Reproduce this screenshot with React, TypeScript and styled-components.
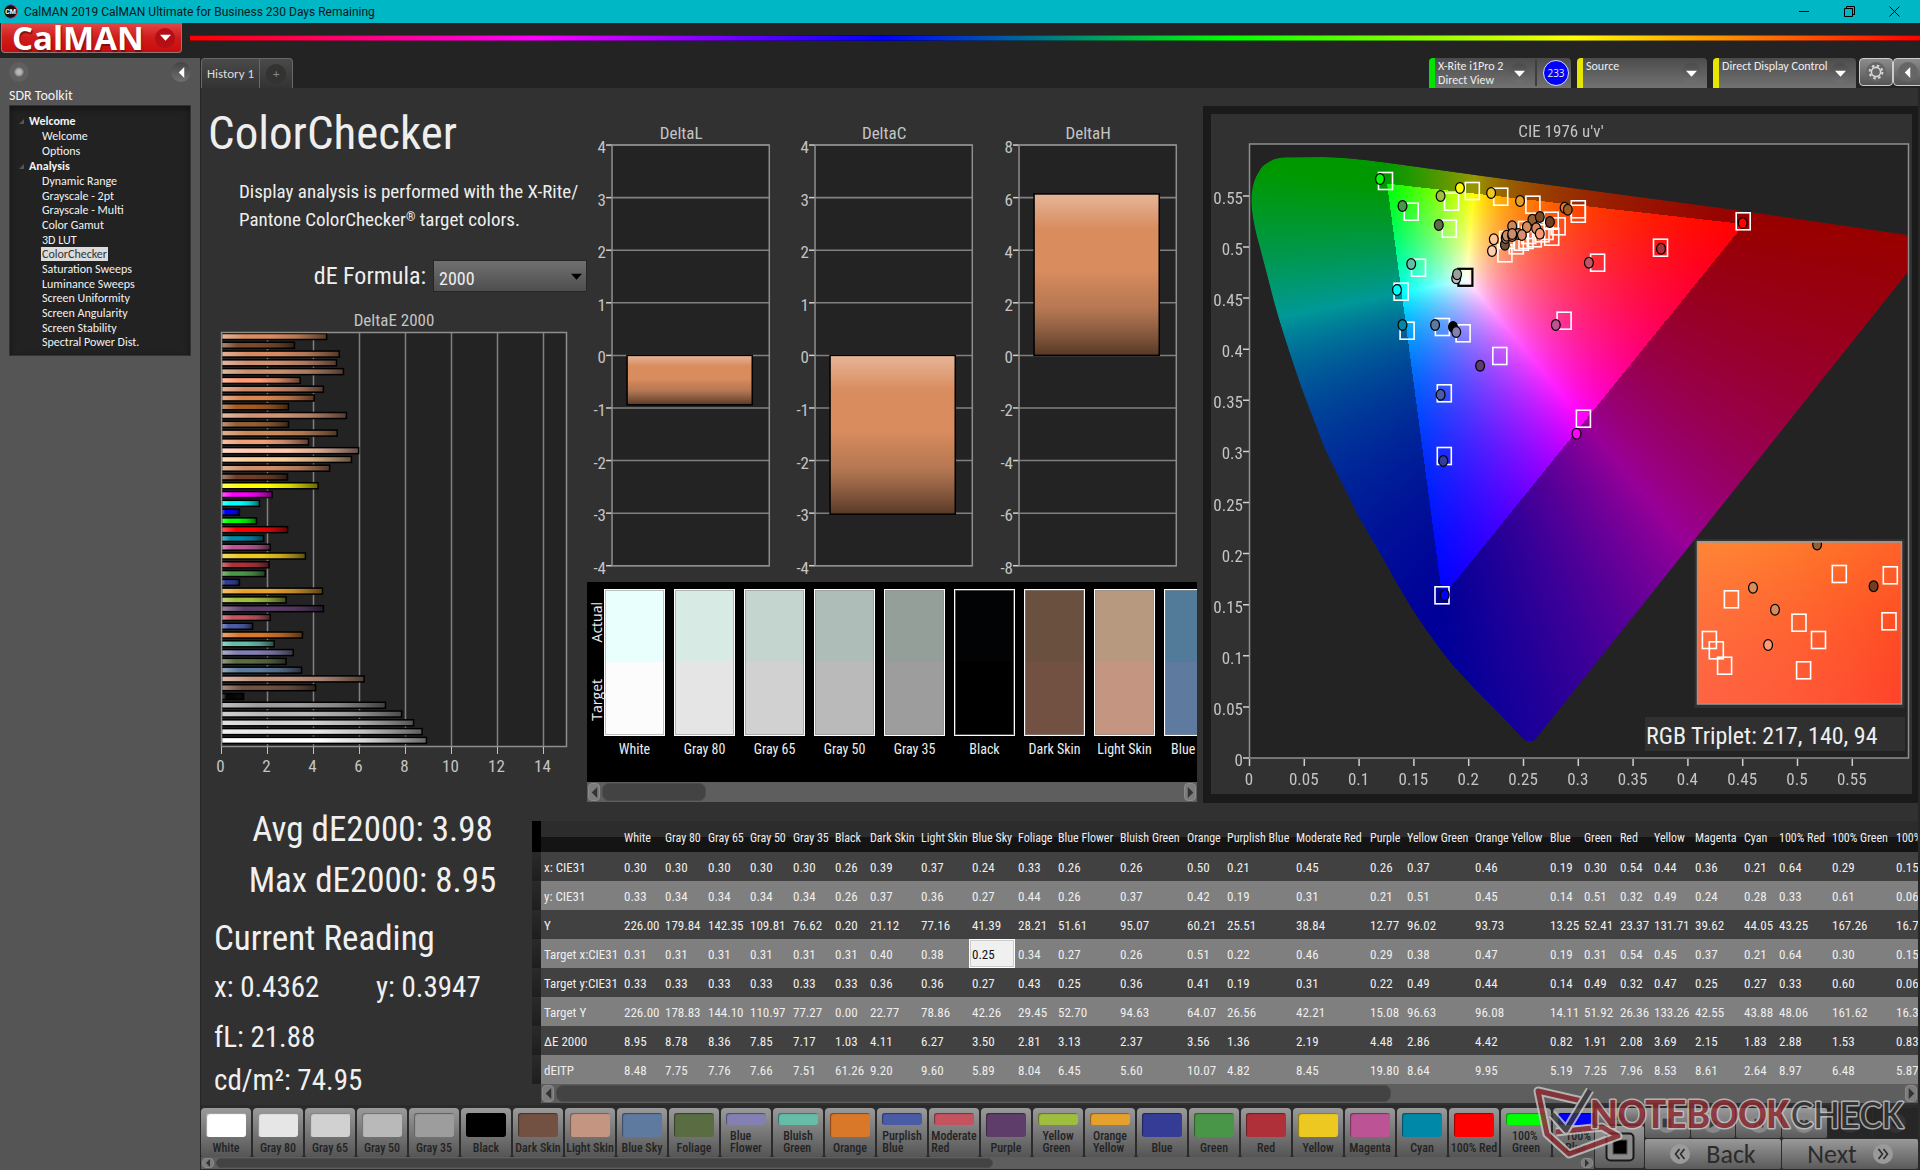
import React, { useLayoutEffect, useRef } from "react";
import styled, { createGlobalStyle, css } from "styled-components";

const ui = `Carlito, Calibri, Lato, sans-serif`;
const narrow = `"Roboto Condensed", Roboto, sans-serif`;

const GlobalStyle = createGlobalStyle`
  *, *::before, *::after { box-sizing: border-box; }
  body { margin: 0; background: #232323; color: #eee; font-family: ${ui}; }
  button { font: inherit; color: inherit; border: 0; padding: 0; margin: 0; cursor: pointer; }
  h1, h2, p, ul, dl, dd, dt { margin: 0; padding: 0; }
  ul { list-style: none; }
  a { color: inherit; text-decoration: none; }
`;

/* ---------- data ---------- */

type Patch = { name: string; color: string; values: string[]; width: number };

const rowNames = ["x: CIE31", "y: CIE31", "Y", "Target x:CIE31", "Target y:CIE31", "Target Y", "ΔE 2000", "dEITP"];

const patches: Patch[] = [
  { name: "White", color: "#ffffff", width: 41, values: ["0.30", "0.33", "226.00", "0.31", "0.33", "226.00", "8.95", "8.48"] },
  { name: "Gray 80", color: "#e6e6e6", width: 43, values: ["0.30", "0.34", "179.84", "0.31", "0.33", "178.83", "8.78", "7.75"] },
  { name: "Gray 65", color: "#d1d1d1", width: 42, values: ["0.30", "0.34", "142.35", "0.31", "0.33", "144.10", "8.36", "7.76"] },
  { name: "Gray 50", color: "#b9b9b9", width: 43, values: ["0.30", "0.34", "109.81", "0.31", "0.33", "110.97", "7.85", "7.66"] },
  { name: "Gray 35", color: "#9d9d9d", width: 42, values: ["0.30", "0.34", "76.62", "0.31", "0.33", "77.27", "7.17", "7.51"] },
  { name: "Black", color: "#000000", width: 35, values: ["0.26", "0.26", "0.20", "0.31", "0.33", "0.00", "1.03", "61.26"] },
  { name: "Dark Skin", color: "#735142", width: 51, values: ["0.39", "0.37", "21.12", "0.40", "0.36", "22.77", "4.11", "9.20"] },
  { name: "Light Skin", color: "#c49682", width: 51, values: ["0.37", "0.36", "77.16", "0.38", "0.36", "78.86", "6.27", "9.60"] },
  { name: "Blue Sky", color: "#5e7a9e", width: 46, values: ["0.24", "0.27", "41.39", "0.25", "0.27", "42.26", "3.50", "5.89"] },
  { name: "Foliage", color: "#596c42", width: 40, values: ["0.33", "0.44", "28.21", "0.34", "0.43", "29.45", "2.81", "8.04"] },
  { name: "Blue Flower", color: "#8480b1", width: 62, values: ["0.26", "0.26", "51.61", "0.27", "0.25", "52.70", "3.13", "6.45"] },
  { name: "Bluish Green", color: "#65bda8", width: 67, values: ["0.26", "0.37", "95.07", "0.26", "0.36", "94.63", "2.37", "5.60"] },
  { name: "Orange", color: "#d97829", width: 40, values: ["0.50", "0.42", "60.21", "0.51", "0.41", "64.07", "3.56", "10.07"] },
  { name: "Purplish Blue", color: "#4a5ca6", width: 69, values: ["0.21", "0.19", "25.51", "0.22", "0.19", "26.56", "1.36", "4.82"] },
  { name: "Moderate Red", color: "#c45360", width: 74, values: ["0.45", "0.31", "38.84", "0.46", "0.31", "42.21", "2.19", "8.45"] },
  { name: "Purple", color: "#5e3d6b", width: 37, values: ["0.26", "0.21", "12.77", "0.29", "0.22", "15.08", "4.48", "19.80"] },
  { name: "Yellow Green", color: "#9fbd3f", width: 68, values: ["0.37", "0.51", "96.02", "0.38", "0.49", "96.63", "2.86", "8.64"] },
  { name: "Orange Yellow", color: "#e6a12d", width: 75, values: ["0.46", "0.45", "93.73", "0.47", "0.44", "96.08", "4.42", "9.95"] },
  { name: "Blue", color: "#343c96", width: 34, values: ["0.19", "0.14", "13.25", "0.19", "0.14", "14.11", "0.82", "5.19"] },
  { name: "Green", color: "#4a9648", width: 36, values: ["0.30", "0.51", "52.41", "0.31", "0.49", "51.92", "1.91", "7.25"] },
  { name: "Red", color: "#b0303a", width: 34, values: ["0.54", "0.32", "23.37", "0.54", "0.32", "26.36", "2.08", "7.96"] },
  { name: "Yellow", color: "#ecc820", width: 41, values: ["0.44", "0.49", "131.71", "0.45", "0.47", "133.26", "3.69", "8.53"] },
  { name: "Magenta", color: "#bc5395", width: 49, values: ["0.36", "0.24", "39.62", "0.37", "0.25", "42.55", "2.15", "8.61"] },
  { name: "Cyan", color: "#0088a8", width: 35, values: ["0.21", "0.28", "44.05", "0.21", "0.27", "43.88", "1.83", "2.64"] },
  { name: "100% Red", color: "#ff0000", width: 53, values: ["0.64", "0.33", "43.25", "0.64", "0.33", "48.06", "2.88", "8.97"] },
  { name: "100% Green", color: "#00ff00", width: 64, values: ["0.29", "0.61", "167.26", "0.30", "0.60", "161.62", "1.53", "6.48"] },
  { name: "100% Blue", color: "#0000ff", width: 60, values: ["0.15", "0.06", "16.75", "0.15", "0.06", "16.31", "0.83", "5.87"] },
];

const deltaE: [number, string][] = [
  [4.57, "#d98c5e"], [3.17, "#7b4a2a"], [5.12, "#d68a62"], [5, "#cf9072"], [5.3, "#c9906e"], [3.42, "#ff9c74"],
  [4.43, "#d08a6a"], [4.03, "#d98450"], [2.91, "#a55a20"], [5.43, "#d49474"], [2.91, "#935f35"], [5.03, "#c88a5a"],
  [3.78, "#f0a078"], [5.96, "#ffc8ac"], [5.65, "#ffcc98"], [4.7, "#d08c64"], [2.87, "#703e26"], [4.2, "#ffff00"],
  [2.2, "#ff00ff"], [1.65, "#00ffff"], [0.78, "#0000ff"], [1.52, "#00ff00"], [2.87, "#ff0000"], [1.83, "#0088a8"],
  [2.12, "#bc5395"], [3.65, "#ecc820"], [2.07, "#b0303a"], [1.9, "#4a9648"], [0.78, "#343c96"], [4.39, "#e6a12d"],
  [2.81, "#9fbd3f"], [4.43, "#5e3d6b"], [2.12, "#c45360"], [1.35, "#4a5ca6"], [3.52, "#d97829"], [2.29, "#65bda8"],
  [3.12, "#8480b1"], [2.81, "#596c42"], [3.48, "#5e7a9e"], [6.2, "#c49682"], [4.09, "#735142"], [0.96, "#050505"],
  [7.13, "#9d9d9d"], [7.83, "#b9b9b9"], [8.35, "#d1d1d1"], [8.72, "#e6e6e6"], [8.91, "#ffffff"],
];

/* ---------- title bar and header ---------- */

const Page = styled.div`display: flex; flex-direction: column; min-height: 100vh;`;

const TitleBar = styled.header`
  display: flex; align-items: center; gap: 6px; height: 23px; padding: 0 15px 0 3px;
  background: #00b7c6; color: #04181a; font: 12px Roboto, "Open Sans", sans-serif;
  & > span { flex: 1; }
`;
const WindowButton = styled.button`
  display: grid; place-items: center; width: 22px; height: 20px; margin-left: 17px; background: none;
`;

const Banner = styled.div`display: flex; height: 35px; padding: 0 0 0 1px; gap: 8px;`;
const Brand = styled.button`
  display: flex; align-items: center; justify-content: space-between; width: 181px; height: 30px; padding: 0 6px 0 10px;
  background: linear-gradient(#e04848, #d01c1c 50%, #c80c0c); border: 1px solid #8d7a7a; border-top: 0;
  border-radius: 0 0 4px 4px; color: #fff; font: 700 33px/28px "Open Sans", "Noto Sans", sans-serif;
  text-shadow: 1px 2px 1px #7a1010;
`;
const Spectrum = styled.div`
  flex: 1; height: 6px; margin-top: 12px; border: solid #0006; border-width: 1px 0;
  background: linear-gradient(90deg, red, magenta 20%, blue 40%, lime 60%, yellow 80%, red);
`;
const Round = styled.span<{ $tone?: string }>`
  display: grid; place-items: center; width: 20px; height: 20px; border-radius: 50%;
  background: ${(p) => p.$tone ?? "linear-gradient(#4a4a4a, #707070)"};
`;

const Triangle = ({ dir, color = "#fff", size = 11 }: { dir: "down" | "left" | "right"; color?: string; size?: number }) => {
  const d = { down: "M0 2.5H10L5 8Z", left: "M7.5 0V10L2.5 5Z", right: "M2.5 0V10L7.5 5Z" }[dir];
  return <svg width={size} height={size} viewBox="0 0 10 10" aria-hidden="true"><path d={d} fill={color} /></svg>;
};

/* ---------- sidebar ---------- */

const Body = styled.div`display: flex; flex: 1;`;
const Sidebar = styled.aside`width: 200px; flex: none; background: #555; color: #f2f2f2;`;
const SidebarTop = styled.div`display: flex; justify-content: space-between; align-items: center; height: 28px; padding: 0 9px;`;
const Lamp = styled.span`
  width: 20px; height: 20px; border-radius: 50%;
  background: radial-gradient(circle, #b8b8b8 0 2px, #8c8c8c 4px, #606060 5px, #5c5c5c);
`;
const SidebarTitle = styled.h2`padding: 1px 0 0 9px; font: 14px/18px ${ui};`;
const Tree = styled.nav`
  margin: 0 9px; padding: 7px 0 5px; border: 1px solid #333; background: #222; box-shadow: inset 0 3px 6px #141414; font-size: 12px;
`;
const Branch = styled.p`
  display: flex; align-items: center; gap: 5px; padding-left: 9px; font-weight: 700; line-height: 16px;
`;
const Leaves = styled.ul<{ $height: number }>`
  display: grid; grid-auto-rows: 1fr; justify-items: start; height: ${(p) => p.$height}px; padding-left: 31px;
`;
const Leaf = styled.a<{ $on?: boolean }>`
  display: block; padding: 0 1px; line-height: 14px;
  ${(p) => p.$on && css`background: #dcdcdc; color: #333;`}
`;

/* ---------- workspace ---------- */

const Work = styled.main`display: flex; flex-direction: column; flex: 1; min-width: 0; border-left: 1px solid #262626;`;
const TopTabs = styled.div`display: flex; justify-content: space-between; height: 30px;`;
const Tabs = styled.div`
  display: flex; border: 1px solid #686868; border-bottom: 0; border-radius: 4px 4px 0 0;
  background: linear-gradient(#4a4a4a, #333); font-size: 13px;
`;
const Tab = styled.button`
  display: grid; place-items: center; background: none; min-width: 33px; padding: 0 5px; color: #ddd;
  & + & { border-left: 1px solid #686868; color: #8a8a8a; }
`;
const Devices = styled.div`display: flex; gap: 6px;`;
const Device = styled.div<{ $w: number; $mark: string }>`
  display: flex; align-items: center; width: ${(p) => p.$w}px; border-radius: 4px 4px 0 0; overflow: hidden;
  border-left: 6px solid ${(p) => p.$mark}; background: linear-gradient(#4c4c4c, #727272);
  font-size: 12px; line-height: 14px; white-space: nowrap;
`;
const DeviceButton = styled.button`
  display: flex; flex: 1; align-self: stretch; align-items: center; justify-content: space-between; padding: 0 6px 0 3px; background: none; text-align: left;
  & > span:first-child { align-self: start; padding-top: 1px; }
`;
const Meter = styled.span`
  display: grid; place-items: center; width: 26px; height: 26px; margin: 0 2px 0 6px; border-radius: 50%; border: 1px solid #dde; background: #00f;
  font: 10px "Open Sans", sans-serif;
`;
const DeviceSplit = styled.span`width: 2px; height: 26px; background: #3e3e3e;`;
const ToolButtons = styled.div`display: flex; width: 61px; margin-left: -3px; overflow: hidden;`;
const ToolButton = styled.button`
  display: grid; place-items: center; flex: none; width: 34px; height: 28px; padding-right: 5px; border: 1px solid #ccc; border-radius: 4px; background: linear-gradient(#8c8c8c, #555);
  &:first-child { padding: 0; }
`;

const Panel = styled.section`flex: 1; background: #313131; border-right: 2px solid #262626;`;
const Upper = styled.div`
  display: grid; grid-template-columns: 386px minmax(0, 616fr) minmax(0, 715fr); height: 715px;
`;
const LeftColumn = styled.div`padding-top: 12px; font-family: ${narrow};`;
const Heading = styled.h1`padding-left: 7px; font: 400 47px/66px ${narrow};`;
const Intro = styled.p`margin-top: 12px; padding-left: 38px; font-size: 19px; line-height: 28px; white-space: nowrap;`;
const Registered = styled.span`font-size: 12px; line-height: 1; vertical-align: 5px;`;
const Formula = styled.div`
  display: flex; align-items: center; justify-content: flex-end; gap: 7px; height: 32px; margin: 26px 0 16px; font-size: 24px;
`;
const SelectBox = styled.span`
  display: grid; align-items: center; width: 154px; height: 32px;
  & > * { grid-area: 1 / 1; }
  & > svg { justify-self: end; margin-right: 5px; pointer-events: none; }
`;
const Select = styled.select`
  appearance: none; width: 100%; height: 100%; padding: 4px 5px 0; border: 1px solid #262626; border-radius: 0;
  background: linear-gradient(#707070, #4e4e4e); color: #eee; font: 18px ${narrow};
`;
const Chart = styled.svg`display: block; width: 100%; height: auto; font-family: ${narrow}; font-size: 17px; fill: #c4c4c4;`;

const MiddleColumn = styled.div`display: flex; flex-direction: column; justify-content: space-between; padding: 32px 6px 1px 0;`;
const DeltaRow = styled.div`display: grid; grid-template-columns: repeat(3, 1fr);`;

const Compare = styled.div`background: #000;`;
const CompareBody = styled.div`display: flex; height: 200px; padding-top: 7px; overflow: hidden;`;
const Sides = styled.div`
  display: grid; grid-template-rows: 66px 90px; flex: none; width: 17px; place-items: center; font: 14px "Open Sans", sans-serif;
  & > span { writing-mode: vertical-rl; transform: rotate(180deg); }
`;
const Pair = styled.figure`
  display: flex; flex-direction: column; flex: none; align-items: center; width: 61px; margin: 0 9px 0 0; font: 14px/26px ${narrow}; white-space: nowrap;
`;
const PairBox = styled.div<{ $actual: string; $target: string }>`
  width: 100%; height: 147px; border: 1px solid #fff;
  background: linear-gradient(${(p) => p.$actual} 50%, ${(p) => p.$target} 50%); box-shadow: inset 0 0 0 1px #8888;
`;

const Scroll = styled.div<{ $h: number }>`
  display: flex; align-items: center; gap: 2px; height: ${(p) => p.$h}px; padding: 1px; background: #5e5e5e;
`;
const ScrollButton = styled.button`
  display: grid; place-items: center; width: 12px; height: 100%; border-radius: 4px; border: 1px solid #8a8a8a; background: #7c7c7c;
`;
const ScrollTrack = styled.span`flex: 1; height: 100%;`;
const ScrollThumb = styled.span<{ $w: string }>`display: block; width: ${(p) => p.$w}; height: 100%; border-radius: 7px; background: #434343; border: 1px solid #4c4c4c;`;

const ScrollBar = ({ h, thumb }: { h: number; thumb: string }) => (
  <Scroll $h={h}>
    <ScrollButton aria-label="Scroll left"><Triangle dir="left" color="#333" size={h > 12 ? 11 : 8} /></ScrollButton>
    <ScrollTrack><ScrollThumb $w={thumb} /></ScrollTrack>
    <ScrollButton aria-label="Scroll right"><Triangle dir="right" color="#333" size={h > 12 ? 11 : 8} /></ScrollButton>
  </Scroll>
);

const CieFrame = styled.div`margin-top: 18px; padding: 8px 6px 9px 8px; height: 697px; background: #1a1a1a;`;
const CieBody = styled.div`
  display: grid; background: #313131;
  & > * { grid-area: 1 / 1; width: 100%; height: auto; }
`;

/* ---------- lower part ---------- */

const Lower = styled.div`display: flex; height: 302px;`;
const Stats = styled.div`width: 331px; flex: none; padding-top: 1px; font-family: ${narrow}; color: #f0f0f0;`;
const BigStat = styled.p`text-align: center; padding-left: 12px; font-size: 35px; line-height: 51px;`;
const StatTitle = styled.h2`margin-top: 9px; padding-left: 13px; font-size: 35px; font-weight: 400; line-height: 48px;`;
const Reading = styled.p<{ $lh: number }>`
  display: grid; grid-template-columns: 162px 1fr; padding-left: 13px; font-size: 29px; line-height: ${(p) => p.$lh}px;
`;
const Spacer = styled.div`height: 4px;`;
const TableArea = styled.div`flex: 1; min-width: 0; padding-top: 18px;`;
const TableClip = styled.div`overflow: hidden;`;
const Table = styled.table`
  table-layout: fixed; width: 0; border-collapse: collapse; font: 13px ${narrow}; white-space: nowrap;
  th, td { padding: 2px 0 0 3px; text-align: left; font-weight: 400; overflow: visible; }
  thead tr { height: 31px; background: linear-gradient(#2c2c2c 50%, #141414 50%); font-size: 12px; }
  tbody tr { height: 29px; background: #414141; }
  tbody tr:nth-child(even) { background: #7f7f7f; }
  tr > :first-child { background: linear-gradient(#2a2a2a, #1e1e1e); }
  thead tr > :first-child { background: #000; }
`;
const Cell = styled.td<{ $picked?: boolean }>`
  ${(p) => p.$picked && css`background: #f0f0f0; color: #111; box-shadow: inset 0 0 0 1px #fff, inset 0 0 0 2px #ccc;`}
`;
const TableScroll = styled.div`padding-left: 9px;`;

/* ---------- footer ---------- */

const Footer = styled.footer`
  position: relative; display: flex; gap: 1px; height: 65px; padding: 3px 2px 2px 0; background: #2b2b2b;
`;
const Palette = styled.div`flex: 1; min-width: 0;`;
const PaletteRow = styled.div`display: flex; gap: 2px; height: 49px; overflow: hidden;`;
const PatchButton = styled.button`
  display: flex; flex-direction: column; align-items: center; flex: none; width: 50px; padding: 5px 0 2px; border-radius: 4px 4px 2px 2px;
  background: linear-gradient(#9a9a9a, #555); color: #232323; font: 500 12px/12px ${narrow}; white-space: nowrap;
`;
const Chip = styled.span<{ $c: string; $short: boolean }>`
  width: 40px; height: ${(p) => (p.$short ? 12 : 24)}px; margin-bottom: 5px; border-radius: 3px;
  background: ${(p) => p.$c}; box-shadow: inset 1px 1px 1px #0006;
`;
const ChipLabel = styled.span`text-align: left;`;
const Side = styled.div`
  display: grid; grid-template-rows: 16px 1fr; gap: 2px; width: 49px;
`;
const GrayButton = styled.button<{ $dark?: boolean }>`
  display: flex; align-items: center; justify-content: center; gap: 16px; border-radius: 2px;
  background: ${(p) => (p.$dark ? "#262626" : "linear-gradient(#999, #5a5a5a)")}; color: #2b2b2b; font: 26px/28px ${ui};
`;
const Transport = styled.div`display: grid; grid-template-columns: repeat(6, 1fr); grid-template-rows: 30px 30px; gap: 1px; width: 273px;
  & > :nth-last-child(-n + 2) { grid-column: span 3; }
`;
const Watermark = styled.svg`position: absolute; right: 4px; bottom: 8px; width: 386px; height: 78px; pointer-events: none;`;

/* ---------- charts ---------- */

const Shade = ({ id, vertical }: { id: string; vertical?: boolean }) => (
  <linearGradient id={id} x1="0" y1="0" x2={vertical ? 0 : 1} y2={vertical ? 1 : 0}>
    <stop offset="0" stopColor="#fff" stopOpacity=".36" />
    <stop offset=".22" stopColor="#fff" stopOpacity="0" />
    <stop offset=".48" stopColor="#000" stopOpacity="0" />
    <stop offset=".7" stopColor="#222" stopOpacity=".18" />
    <stop offset="1" stopColor="#000" stopOpacity=".6" />
  </linearGradient>
);

const DeltaEChart = () => (
  <Chart viewBox="0 0 386 480" role="img" aria-label="DeltaE 2000">
    <defs><Shade id="barShade" /></defs>
    <text x="193" y="18" textAnchor="middle">DeltaE 2000</text>
    <rect x="20" y="24" width="346" height="414" fill="#232323" />
    {[2, 4, 6, 8, 10, 12, 14].map((v) => <path key={v} d={`M${20.5 + v * 23} 24V438`} stroke="#808080" strokeWidth="1.5" />)}
    {deltaE.map(([v, c], i) => (
      <g key={i}>
        <rect x="20.5" y={25.5 + i * 8.78} width={v * 23} height="6" fill={c} />
        <rect x="20.5" y={25.5 + i * 8.78} width={v * 23} height="6" fill="url(#barShade)" stroke="#000" strokeWidth="1.5" />
      </g>
    ))}
    <rect x="20.5" y="24.5" width="345" height="414" fill="none" stroke="#8e8e8e" strokeWidth="1.5" />
    {[0, 2, 4, 6, 8, 10, 12, 14].map((v) => (
      <g key={v}>
        <path d={`M${20.5 + v * 23} 439v7`} stroke="#c4c4c4" />
        <text x={19.5 + v * 23} y="464" textAnchor="middle">{v}</text>
      </g>
    ))}
  </Chart>
);

const DeltaChart = ({ title, max, value }: { title: string; max: number; value: number }) => {
  const top = 25, unit = 420 / (max * 2), zero = top + 210;
  const y = value > 0 ? zero - value * unit : zero;
  return (
    <Chart viewBox="0 0 203 455" role="img" aria-label={title}>
      <defs><Shade id={`shade${title}`} vertical /></defs>
      <text x="94" y="19" textAnchor="middle">{title}</text>
      <rect x="25" y={top} width="157" height="420" fill="#232323" />
      {Array.from({ length: 9 }, (_, i) => (
        <g key={i}>
          <path d={`M25 ${top + i * 52.5}H182`} stroke="#808080" strokeWidth="1.5" />
          <path d={`M19 ${top + i * 52.5}h6`} stroke="#d0d0d0" strokeWidth="1.5" />
          <text x="19" y={top + 8 + i * 52.5} textAnchor="end">{max - (i * max) / 4}</text>
        </g>
      ))}
      <rect x="25" y={top} width="157" height="420" fill="none" stroke="#8e8e8e" strokeWidth="1.5" />
      <rect x="40" y={y} width="125" height={Math.abs(value) * unit} fill="#d98c5e" />
      <rect x="40" y={y} width="125" height={Math.abs(value) * unit} fill={`url(#shade${title})`} stroke="#000" strokeWidth="1.5" />
    </Chart>
  );
};

/* CIE diagram: coordinates share the 701 x 680 space of the drawing */
const CX = 38.5, CY = 644, UX = 1096, UY = 1022;

const locus = "M40.4 89C40 75 43 65 47.8 57.7C51 51 56 49 62 45.5C68 43.5 74 43.3 80 43.3L112 43C135 43.5 155 46 172.7 48.3L264.5 61L532 97L697 121V158L324 626C320 629 315 628 312 625C302 614 292 604 282.8 594.3C268 580 255 566 241.5 551C230 537 219 522 209.4 507.7C196 488 184 467 172.7 446L147.4 402.7L113.9 335.3L90 272.7C80 243 70 214 62.5 186L48.7 132.7C44 116 41 102 40.4 89Z";

const paintDiagram = (canvas: HTMLCanvasElement) => {
  const { width: w, height: h } = canvas;
  const layer = document.createElement("canvas");
  layer.width = w;
  layer.height = h;
  const lc = layer.getContext("2d");
  const ctx = canvas.getContext("2d");
  if (!lc || !ctx) return;
  const img = lc.createImageData(w, h);
  for (let py = 0; py < h; py++) {
    for (let px = 0; px < w; px++) {
      const u = (px - CX) / UX;
      const v = Math.max((CY - py) / UY, 0.005);
      const X = (9 * u) / (4 * v);
      const Z = (12 - 3 * u - 20 * v) / (4 * v);
      const r = 3.2406 * X - 1.5372 - 0.4986 * Z;
      const g = -0.9689 * X + 1.8758 + 0.0415 * Z;
      const b = 0.0557 * X - 0.204 + 1.057 * Z;
      const top = Math.max(r, g, b, 0.0001);
      const level = r < 0 || g < 0 || b < 0 ? 152 : 255;
      const o = (py * w + px) * 4;
      img.data[o] = Math.max(r / top, 0) * level;
      img.data[o + 1] = Math.max(g / top, 0) * level;
      img.data[o + 2] = Math.max(b / top, 0) * level;
      img.data[o + 3] = 255;
    }
  }
  lc.putImageData(img, 0, 0);
  ctx.save();
  ctx.clip(new Path2D(locus));
  ctx.drawImage(layer, 0, 0);
  ctx.restore();
};

/* marker centres in the drawing's space */
const targets: [number, number][] = [
  [174.5, 67], [261.3, 77], [240.6, 87.7], [200.2, 97.7], [289.7, 82.7], [321.9, 90.7], [238.3, 114.7], [367.3, 95.3],
  [367.3, 99.7], [207.5, 153.7], [190.1, 177.7], [196.1, 216.7], [231.4, 213], [252.1, 219.3], [288.8, 242], [233.3, 279.3],
  [372.4, 304.7], [353.1, 206.7], [386.6, 148.7], [449.5, 133.7], [532.2, 107.3], [340.2, 106.7], [347.1, 112.3],
  [340.7, 122.7], [293.9, 139.3], [305.3, 131.3], [310.4, 127.7], [315, 126], [317.7, 121], [323.3, 124.3], [331, 119.3],
  [335, 117], [314.5, 116], [295.7, 126], [233.3, 342], [231, 481.3],
];
const measured: [number, number, string][] = [
  [169, 65, "#00ff00"], [248.9, 74, "#ffff00"], [229.6, 82, "#9fbd3f"], [191.5, 92, "#4a9648"], [227.8, 111, "#596e42"],
  [280.1, 79, "#ecc820"], [309, 87, "#e6a12d"], [353.6, 93.7, "#d97829"], [356.8, 95.7, "#a55a20"], [321.4, 105.7, "#935f35"],
  [328.8, 103, "#7a4a26"], [338.9, 108, "#703e22"], [301.2, 112.3, "#c8895c"], [315.9, 113, "#d98c5e"], [325.1, 114.3, "#d68a5f"],
  [293.9, 130.7, "#6b4d3c"], [294.8, 124, "#b98468"], [307.2, 120, "#d18c68"], [295.7, 121.7, "#c98e68"], [301.2, 122, "#c89072"],
  [301.2, 120, "#cd8c6a"], [310.9, 121, "#d49070"], [328.8, 119.7, "#ff9c74"], [282.8, 125.3, "#ffc49a"], [281, 137, "#ffcdb0"],
  [200.2, 150, "#67bdaa"], [186, 176, "#00ffff"], [191.5, 211, "#0088a8"], [224.1, 211, "#5e7a9f"], [242, 213, "#000000"],
  [245.2, 218, "#8580b1"], [269.1, 251.7, "#5e3d6e"], [229.6, 280.7, "#4a5ca6"], [365.5, 319.7, "#ff00ff"],
  [344.8, 211, "#bc5395"], [377.9, 148.7, "#c45360"], [450, 134.7, "#b0303a"], [531.7, 109, "#ff0000"],
  [245.2, 164.3, "#c0c0c0"], [246.1, 160.3, "#9e9e9e"], [232.3, 347, "#343c96"], [233.7, 481, "#0000ff"],
];
const zoomTargets: [number, number][] = [
  [628.3, 460], [679.3, 461.3], [520.4, 485.3], [588, 508.7], [678, 507.3], [498.4, 526], [505.3, 536.3], [513.6, 551.7],
  [607.5, 526], [592.6, 556.3],
];
const zoomMeasured: [number, number, string][] = [
  [606.1, 430.5, "#935f35"], [542, 473.7, "#d98c5e"], [564, 495.7, "#d68a5f"], [662.6, 472.3, "#703e22"], [557.1, 531, "#ff9c74"],
];

const Target = ({ x, y, stroke = "#fff" }: { x: number; y: number; stroke?: string }) => (
  <rect x={x - 7} y={y - 8.5} width="14" height="17" fill="none" stroke={stroke} strokeWidth={stroke === "#fff" ? 1.6 : 2.2} />
);
const Dot = ({ x, y, fill }: { x: number; y: number; fill: string }) => (
  <ellipse cx={x} cy={y} rx="4.4" ry="5.4" fill={fill} stroke="#000" strokeWidth="1.2" />
);

const CieChart = () => {
  const ref = useRef<HTMLCanvasElement>(null);
  useLayoutEffect(() => {
    if (ref.current) paintDiagram(ref.current);
  }, []);
  const steps = Array.from({ length: 12 }, (_, i) => i);
  return (
    <CieBody>
      <canvas ref={ref} width={701} height={680} aria-hidden="true" />
      <Chart viewBox="0 0 701 680" role="img" aria-label="CIE 1976 u'v'">
        <defs>
          <linearGradient id="zoomA" x1="0" y1="0" x2="1" y2="1">
            <stop offset="0" stopColor="#ff8e30" /><stop offset=".5" stopColor="#ff6228" /><stop offset="1" stopColor="#ff3a20" />
          </linearGradient>
          <linearGradient id="zoomB" x1="0" y1="1" x2=".7" y2=".3">
            <stop offset="0" stopColor="#ff6450" stopOpacity=".7" /><stop offset="1" stopColor="#ff6450" stopOpacity="0" />
          </linearGradient>
          <clipPath id="zoomClip"><rect x="487" y="428" width="203" height="162" /></clipPath>
        </defs>
        <path fillRule="evenodd" fill="#232323" d={`M38 30H697V644H38Z${locus}`} />
        <text x="350" y="23" textAnchor="middle">CIE 1976 u'v'</text>
        <rect x="38.5" y="30" width="659" height="614" fill="none" stroke="#8e8e8e" strokeWidth="1.5" />
        {steps.map((i) => (
          <g key={i}>
            <path d={`M${38.5 + i * 54.8} 645v7M32 ${644 - i * 51.1}h6`} stroke="#d0d0d0" strokeWidth="1.5" />
            <text x={38 + i * 54.8} y="671" textAnchor="middle">{i * 5 / 100}</text>
            <text x="32" y={652 - i * 51.1} textAnchor="end">{i * 5 / 100}</text>
          </g>
        ))}
        {targets.map(([x, y], i) => <Target key={i} x={x} y={y} />)}
        <Target x={254.4} y={163.3} stroke="#000" />
        {measured.map(([x, y, c], i) => <Dot key={i} x={x} y={y} fill={c} />)}
        <rect x="483.5" y="425" width="210" height="169" fill="#303030" />
        <rect x="486" y="427" width="205" height="163" fill="url(#zoomA)" />
        <rect x="486" y="427" width="205" height="163" fill="url(#zoomB)" />
        <g clipPath="url(#zoomClip)">
          {zoomTargets.map(([x, y], i) => <Target key={i} x={x} y={y} />)}
          {zoomMeasured.map(([x, y, c], i) => <Dot key={i} x={x} y={y} fill={c} />)}
        </g>
        <rect x="486.5" y="428" width="204" height="162" fill="none" stroke="#999" strokeWidth="1.5" />
        <rect x="434" y="603" width="260" height="34" fill="#303030" />
        <text x="435" y="630" fontSize="24" fill="#eee">RGB Triplet: 217, 140, 94</text>
      </Chart>
    </CieBody>
  );
};

/* ---------- page ---------- */

const analysis = ["Dynamic Range", "Grayscale - 2pt", "Grayscale - Multi", "Color Gamut", "3D LUT", "ColorChecker", "Saturation Sweeps", "Luminance Sweeps", "Screen Uniformity", "Screen Angularity", "Screen Stability", "Spectral Power Dist."];

const compared: [string, string, string][] = [
  ["White", "#e8fffd", "#fcfcfc"], ["Gray 80", "#d8eae4", "#e5e5e5"], ["Gray 65", "#c4d4ce", "#d1d1d1"], ["Gray 50", "#aebdb8", "#bababa"],
  ["Gray 35", "#949f9a", "#9d9d9d"], ["Black", "#020304", "#000000"], ["Dark Skin", "#69503f", "#735142"], ["Light Skin", "#b6997e", "#c49682"], ["Blue Sky", "#527a99", "#5e7a9e"],
];

const stacked = new Set(["Blue Flower", "Bluish Green", "Purplish Blue", "Moderate Red", "Yellow Green", "Orange Yellow", "100% Green", "100% Blue"]);

const Expander = () => <svg width="5" height="5" viewBox="0 0 5 5" aria-hidden="true"><path d="M5 0V5H0Z" fill="#555" /></svg>;

const Chevrons = ({ back }: { back?: boolean }) => (
  <svg width="14" height="14" viewBox="0 0 14 14" fill="none" stroke="#2b2b2b" strokeWidth="1.6" aria-hidden="true">
    <path d={back ? "M6.5 2L2.5 7L6.5 12M11.5 2L7.5 7L11.5 12" : "M2.5 2L6.5 7L2.5 12M7.5 2L11.5 7L7.5 12"} />
  </svg>
);

const transportIcons = ["M3 3H13V13H3Z", "M4 2L14 8L4 14Z", "M3 3H5V13H3ZM11 3H13V13H11ZM6 8L10 4V12Z", "M1 8C4 3 7 3 8 8C9 13 12 13 15 8C12 3 9 3 8 8C7 13 4 13 1 8Z", "M3 8A5 5 0 1 0 8 3V8Z", "M8 3A5 5 0 1 0 13 8H8Z"];

export default function App() {
  return (
    <Page>
      <GlobalStyle />
      <TitleBar>
        <svg width="15" height="15" viewBox="0 0 15 15" aria-hidden="true">
          <defs><linearGradient id="ring"><stop stopColor="#2c8" /><stop offset=".5" stopColor="#83c" /><stop offset="1" stopColor="#e33" /></linearGradient></defs>
          <circle cx="7.5" cy="7.5" r="6.8" fill="#111" stroke="url(#ring)" />
          <text x="7.5" y="10" textAnchor="middle" fontSize="7" fontWeight="700" fill="#fff">CM</text>
        </svg>
        <span>CalMAN 2019 CalMAN Ultimate for Business 230 Days Remaining</span>
        <WindowButton aria-label="Minimize"><svg width="11" height="11"><path d="M0 5.5H10" stroke="#000" /></svg></WindowButton>
        <WindowButton aria-label="Restore"><svg width="11" height="11" fill="none" stroke="#000"><path d="M.5 2.5H8.5V10.5H.5ZM2.5 2.5V.5H10.5V8.5H8.5" /></svg></WindowButton>
        <WindowButton aria-label="Close"><svg width="11" height="11" stroke="#000"><path d="M.5 .5L10.5 10.5M10.5 .5L.5 10.5" /></svg></WindowButton>
      </TitleBar>
      <Banner>
        <Brand>CalMAN<Round $tone="#b40f14"><Triangle dir="down" /></Round></Brand>
        <Spectrum />
      </Banner>
      <Body>
        <Sidebar>
          <SidebarTop><Lamp /><Round as="button" aria-label="Collapse" $tone="linear-gradient(#444, #707070)"><Triangle dir="left" /></Round></SidebarTop>
          <SidebarTitle>SDR Toolkit</SidebarTitle>
          <Tree aria-label="SDR Toolkit">
            <Branch><Expander />Welcome</Branch>
            <Leaves $height={29}>{["Welcome", "Options"].map((n) => <li key={n}><Leaf href="#">{n}</Leaf></li>)}</Leaves>
            <Branch><Expander />Analysis</Branch>
            <Leaves $height={176}>{analysis.map((n) => <li key={n}><Leaf href="#" $on={n === "ColorChecker"}>{n}</Leaf></li>)}</Leaves>
          </Tree>
        </Sidebar>
        <Work>
          <TopTabs>
            <Tabs>
              <Tab>History 1</Tab>
              <Tab aria-label="Add"><Round $tone="#333">+</Round></Tab>
            </Tabs>
            <Devices>
              <Device $w={142} $mark="#00e400">
                <DeviceButton><span>X-Rite i1Pro 2<br />Direct View</span><Round><Triangle dir="down" /></Round></DeviceButton>
                <DeviceSplit /><Meter>233</Meter>
              </Device>
              <Device $w={130} $mark="#e6e600"><DeviceButton><span>Source</span><Round><Triangle dir="down" /></Round></DeviceButton></Device>
              <Device $w={143} $mark="#e6e600"><DeviceButton><span>Direct Display Control</span><Round><Triangle dir="down" /></Round></DeviceButton></Device>
              <ToolButtons>
                <ToolButton aria-label="Settings">
                  <Round $tone="#666"><svg width="16" height="16" viewBox="0 0 16 16" fill="none" stroke="#d8d8d8"><circle cx="8" cy="8" r="4.6" strokeWidth="1.6" /><circle cx="8" cy="8" r="6.4" strokeWidth="2" strokeDasharray="2.5 2.53" /></svg></Round>
                </ToolButton>
                <ToolButton aria-label="Collapse"><Round $tone="#666"><Triangle dir="left" /></Round></ToolButton>
              </ToolButtons>
            </Devices>
          </TopTabs>
          <Panel>
            <Upper>
              <LeftColumn>
                <Heading>ColorChecker</Heading>
                <Intro>Display analysis is performed with the X-Rite/<br />Pantone ColorChecker<Registered>®</Registered> target colors.</Intro>
                <Formula>
                  <label htmlFor="formula">dE Formula:</label>
                  <SelectBox>
                    <Select id="formula" defaultValue="2000"><option>2000</option></Select>
                    <Triangle dir="down" color="#000" size={11} />
                  </SelectBox>
                </Formula>
                <DeltaEChart />
              </LeftColumn>
              <MiddleColumn>
                <DeltaRow>
                  <DeltaChart title="DeltaL" max={4} value={-0.94} />
                  <DeltaChart title="DeltaC" max={4} value={-3.02} />
                  <DeltaChart title="DeltaH" max={8} value={6.14} />
                </DeltaRow>
                <Compare>
                  <CompareBody>
                    <Sides><span>Actual</span><span>Target</span></Sides>
                    {compared.map(([n, a, t]) => <Pair key={n}><PairBox $actual={a} $target={t} /><figcaption>{n}</figcaption></Pair>)}
                  </CompareBody>
                  <ScrollBar h={20} thumb="18%" />
                </Compare>
              </MiddleColumn>
              <CieFrame><CieChart /></CieFrame>
            </Upper>
            <Lower>
              <Stats>
                <BigStat>Avg dE2000: 3.98</BigStat>
                <BigStat>Max dE2000: 8.95</BigStat>
                <StatTitle>Current Reading</StatTitle>
                <Reading $lh={48}><span>x: 0.4362</span><span>y: 0.3947</span></Reading>
                <Spacer />
                <Reading $lh={44}>fL: 21.88</Reading>
                <Reading $lh={42}>cd/m²: 74.95</Reading>
              </Stats>
              <TableArea>
                <TableClip>
                  <Table>
                    <colgroup>
                      <col style={{ width: 9 }} /><col style={{ width: 80 }} />
                      {patches.map((p) => <col key={p.name} style={{ width: p.width }} />)}
                    </colgroup>
                    <thead><tr><th /><th />{patches.map((p) => <th key={p.name} scope="col">{p.name}</th>)}</tr></thead>
                    <tbody>
                      {rowNames.map((r, i) => (
                        <tr key={r}>
                          <td /><th scope="row">{r}</th>
                          {patches.map((p) => <Cell key={p.name} $picked={i === 3 && p.name === "Blue Sky"}>{p.values[i]}</Cell>)}
                        </tr>
                      ))}
                    </tbody>
                  </Table>
                </TableClip>
                <TableScroll><ScrollBar h={19} thumb="62%" /></TableScroll>
              </TableArea>
            </Lower>
          </Panel>
          <Footer>
            <Palette>
              <PaletteRow>
                {patches.map((p) => {
                  const short = stacked.has(p.name);
                  const [a, ...rest] = p.name.split(" ");
                  return (
                    <PatchButton key={p.name}>
                      <Chip $c={p.color} $short={short} />
                      <ChipLabel>{short ? <>{a}<br />{rest.join(" ")}</> : p.name}</ChipLabel>
                    </PatchButton>
                  );
                })}
              </PaletteRow>
              <ScrollBar h={12} thumb="57%" />
            </Palette>
            <Side>
              <GrayButton aria-label="Up"><svg width="12" height="8"><path d="M6 0L12 8H0Z" fill="#444" /></svg></GrayButton>
              <GrayButton aria-label="Window pattern">
                <svg width="30" height="30" viewBox="0 0 30 30"><rect x="1.5" y="1.5" width="27" height="27" rx="4" fill="#8a8a8a" stroke="#1a1a1a" strokeWidth="2" /><rect x="8" y="8" width="14" height="14" fill="#000" stroke="#555" /></svg>
              </GrayButton>
            </Side>
            <Transport>
              {transportIcons.map((d, i) => (
                <GrayButton key={i} $dark={i > 3} aria-label={`Transport ${i + 1}`}>
                  <Round $tone={i > 3 ? "#333" : "#888"}><svg width="14" height="14" viewBox="0 0 16 16"><path d={d} fill={i > 3 ? "#222" : "#3a3a3a"} fillRule="evenodd" /></svg></Round>
                </GrayButton>
              ))}
              <GrayButton><Round $tone="#9a9a9a"><Chevrons back /></Round>Back</GrayButton>
              <GrayButton>Next<Round $tone="#9a9a9a"><Chevrons /></Round></GrayButton>
            </Transport>
            <Watermark viewBox="0 0 386 78" aria-hidden="true">
              <g opacity=".8" strokeLinejoin="round" fill="none">
                <path d="M56 18L8 7L17 50L39 70L88 52L72 43L26 48" stroke="#c8c8c8" strokeWidth="9" />
                <path d="M56 18L8 7L17 50L39 70L88 52L72 43L26 48" stroke="#8e2a30" strokeWidth="5" />
                <path d="M22 30L36 46L60 6" stroke="#c8c8c8" strokeWidth="9" />
                <path d="M22 30L36 46L60 6" stroke="#3a3a3a" strokeWidth="5" />
                <g fontFamily={ui} fontSize="42" stroke="#c8c8c8" strokeWidth="3" paintOrder="stroke">
                  <text x="60" y="44" fontWeight="700" fill="#8e2a30">NOTEBOOK</text>
                  <text x="261" y="44" fill="#333">CHECK</text>
                </g>
              </g>
            </Watermark>
          </Footer>
        </Work>
      </Body>
    </Page>
  );
}
